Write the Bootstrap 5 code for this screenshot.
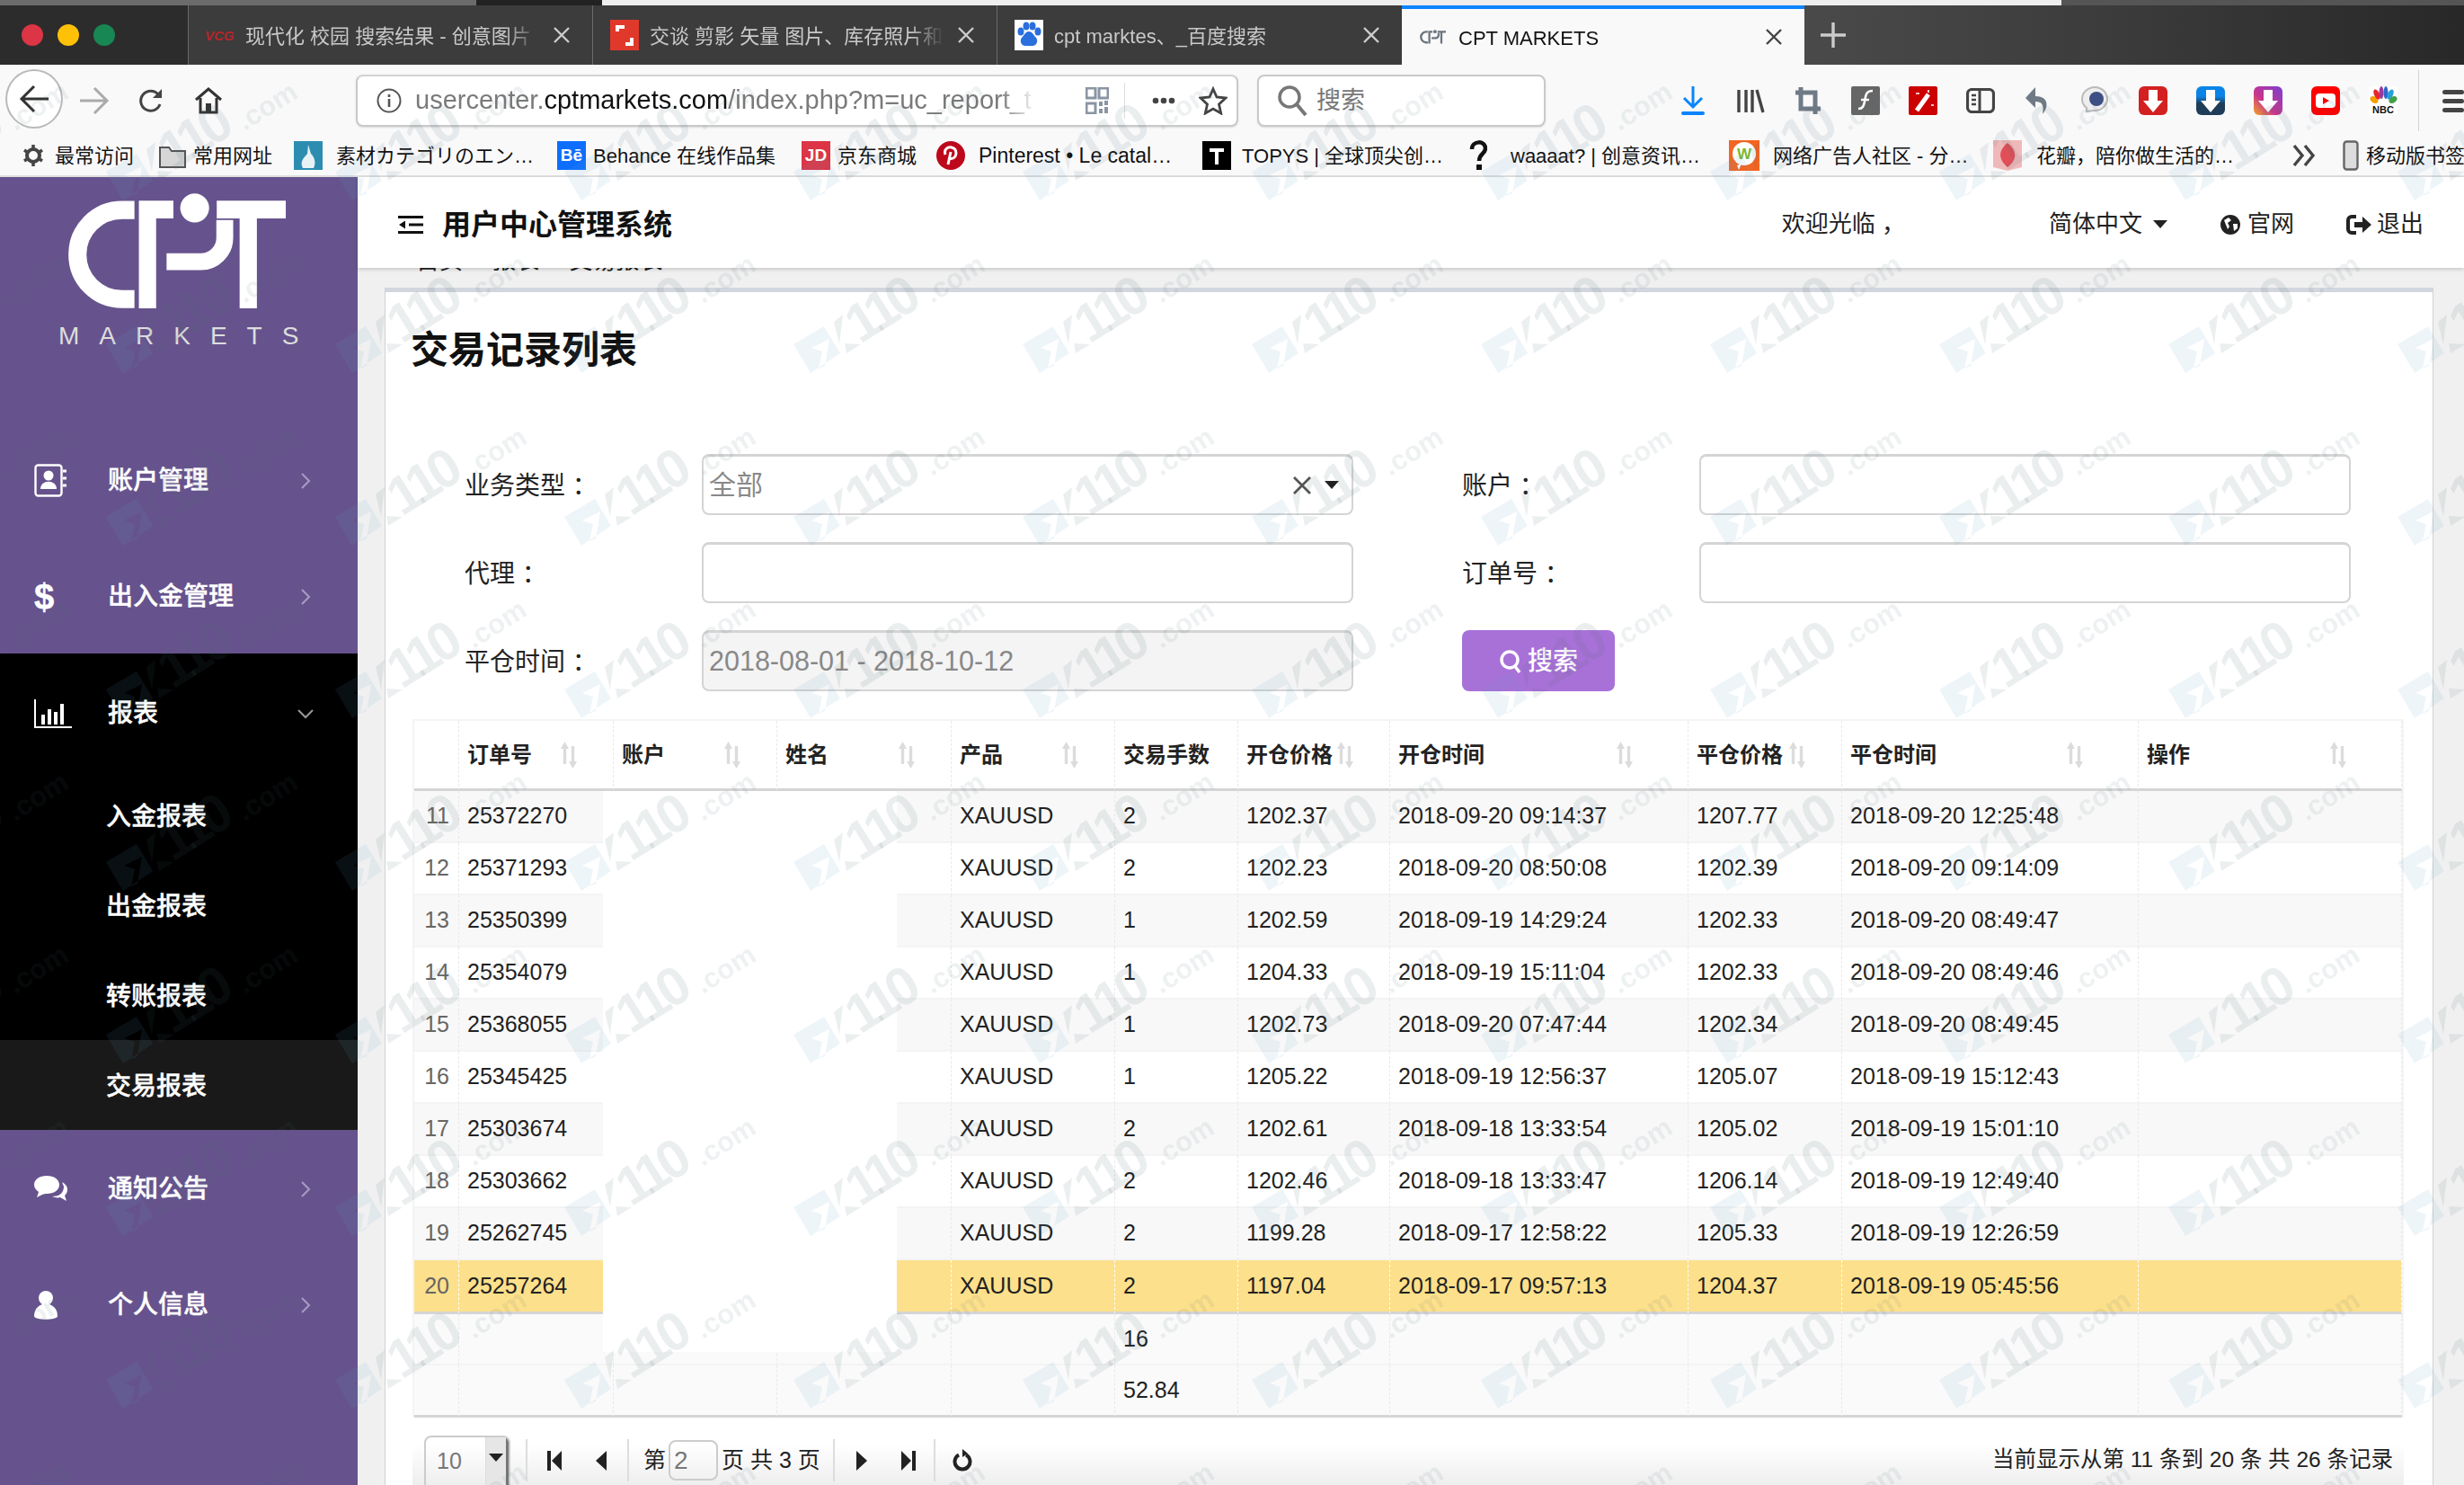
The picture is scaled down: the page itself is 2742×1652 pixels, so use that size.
<!DOCTYPE html>
<html lang="zh-CN">
<head>
<meta charset="UTF-8">
<title>CPT MARKETS</title>
<link href="https://cdn.jsdelivr.net/npm/bootstrap@5.3.3/dist/css/bootstrap.min.css" rel="stylesheet">
<script src="https://cdn.jsdelivr.net/npm/bootstrap@5.3.3/dist/js/bootstrap.bundle.min.js"></script>
<style>
html,body{margin:0;height:100%}
body{font-family:"Liberation Sans","Noto Sans CJK SC",sans-serif;color:#222;background:#f0f0f0;overflow:hidden;font-size:25px}
.page-shell{position:relative;width:2742px;height:1652px;overflow:hidden}
.wm-layer{position:absolute;left:0;top:72px;width:2742px;height:1580px;pointer-events:none;z-index:20}
/* browser chrome */
.top-strip{height:6px;display:flex}
.top-strip span:nth-child(1){width:530px;background:#6b6b6b}
.top-strip span:nth-child(2){width:140px;background:#222}
.top-strip span:nth-child(3){width:1624px;background:#eee}
.top-strip span:nth-child(4){flex:1;background:#555}
.tab-strip{height:66px;display:flex;background:#2c2c2c;color:#c9c9c9;font-size:22px}
.lights{width:209px;display:flex;align-items:center;gap:16px;padding-left:24px}
.lights i{width:24px;height:24px;border-radius:50%}
.tab-item{display:flex;align-items:center;background:#3c3c3c;border-left:1px solid #6a6a6a;white-space:nowrap;overflow:hidden}
.tab-item .tab-ico{width:34px;height:34px;margin-left:18px;margin-right:11px;flex:none;display:flex;align-items:center;justify-content:center}
.tab-item .tab-txt{flex:1;overflow:hidden;padding-top:2px;-webkit-mask-image:linear-gradient(90deg,#000 88%,transparent)}
.tab-item .tab-x{width:20px;margin:0 24px 0 14px;flex:none}
.w450{width:450px}
.w451{width:451px}
.tab-on{width:448px;background:#f9f9fa;color:#111;border-top:4px solid #0a84ff;border-left:0}
.tab-rest{flex:1;background:linear-gradient(90deg,#4a4a4a,#3c3c3c 45%,#282828);display:flex;align-items:center;padding-left:17px}
.tool-row{height:76px;background:#f9f9fa;display:flex;align-items:center;padding:4px 0 0 6px}
.back-btn{width:64px;height:66px;margin-top:-4px;border:2px solid #b9b9b9;border-radius:50%;background:#fff;display:flex;align-items:center;justify-content:center}
.tool-btn{display:flex;align-items:center;justify-content:center;flex:none}
.w70{width:70px}.w56{width:56px}.w72{width:72px}
.url-box{margin-left:128px;width:982px;height:58px;background:#fff;border:2px solid #c9c9c9;border-top-color:#d2d2d2;border-radius:8px;display:flex;align-items:center;padding-left:20px;box-shadow:0 1px 2px rgba(0,0,0,.12)}
.url-text{font-size:29px;color:#7a7a7a;margin-left:14px;width:692px;white-space:nowrap;-webkit-mask-image:linear-gradient(90deg,#000 94%,transparent)}
.url-text b{font-weight:400;color:#111}
.url-side{margin-left:auto;display:flex;align-items:center}
.url-sep{width:1px;height:40px;background:#ddd;margin:0 30px 0 17px}
.star-ico{margin:0 10px 0 26px}
.search-box{margin-left:21px;width:321px;height:58px;background:#fff;border:2px solid #c9c9c9;border-radius:8px;display:flex;align-items:center;padding-left:20px;color:#777;font-size:27px;gap:10px;box-shadow:0 1px 2px rgba(0,0,0,.12)}
.tool-icons{margin-left:132px;display:flex;align-items:center}
.tool-icons>span{width:64px;display:flex;justify-content:center}
.tool-sep{width:1px;height:68px;background:#d4d4d4;margin-left:7px}
.menu-bars{margin-left:26px;width:24px;display:flex;flex-direction:column;gap:5px}
.menu-bars i{height:5px;background:#444;border-radius:3px}
.mark-row{height:49px;background:#f9f9fa;border-bottom:2px solid #ddd;display:flex;align-items:center;padding:3px 0 0 25px;font-size:22px;color:#111;white-space:nowrap}
.mark-item{display:flex;align-items:center;gap:8px;flex:none;overflow:hidden}
.mark-item svg{flex:none}
.fav-box{width:32px;height:32px;display:flex;align-items:center;justify-content:center;font-weight:700;color:#fff;font-size:19px;flex:none}
.latin-wide{font-size:23px}
.bm1{width:152px;gap:12px}.bm2{width:150px}.bm3{width:293px;gap:15px}.bm4{width:272px}.bm5{width:150px}.bm6{width:296px;gap:15px}.bm7{width:292px;gap:12px}
.bm8{width:294px;gap:26px;padding-left:5px}
.bm9{width:294px;gap:15px}.bm10{width:332px;gap:16px}.bm11{width:57px}
/* app */
.app-body{display:flex;height:1455px}
.side-nav{width:398px;flex:none;background:#66538d;color:#fff}
.brand-box{height:272px;padding:12px 0 0 67px}
.brand-word{margin-left:-2px}
.nav-entry{height:129px;display:flex;align-items:center;padding:3px 52px 0 38px;font-size:28px;font-weight:500;color:#fff;text-decoration:none;-webkit-text-stroke:.4px #fff}
.nav-entry .ent-ico{width:82px;flex:none;display:flex}
.nav-entry .ent-arrow{margin-left:auto}
.dollar-sign{font-size:40px;font-weight:700;line-height:1;font-family:"Liberation Sans",sans-serif}
.nav-open{background:#000}
.nav-open .nav-entry{height:131px;padding-right:48px}
.nav-sub{height:100px;display:flex;align-items:center;padding:3px 0 0 118px;font-size:28px;font-weight:500;color:#fff;text-decoration:none;-webkit-text-stroke:.4px #fff}
.nav-sub.now{background:#191919}
.nav-sub.first{height:99px}
.main-col{flex:1;min-width:0;display:flex;flex-direction:column;position:relative}
.head-bar{height:101px;flex:none;background:#fff;box-shadow:0 2px 4px rgba(0,0,0,.16);display:flex;align-items:center;padding:4px 0 0 45px;position:relative;z-index:2;font-size:26px;color:#222}
.head-title{font-size:32px;font-weight:700;margin-left:21px;color:#111}
.head-menu{margin-left:auto;display:flex;align-items:center;padding-right:45px}
.head-menu>span{display:flex;align-items:center}
.hm1{margin-right:160px;white-space:pre}
.hm2{margin-right:59px;gap:12px}
.hm3{margin-right:58px;gap:8px}
.hm4{gap:6px}
.crumb-bar{height:48px;margin-top:-26px;padding-left:65px;font-size:26px;line-height:36px;flex:none;word-spacing:26px}
.report-card{margin:0 34px 0 30px;background:#fff;border-top:5px solid #d2d6de;padding:42px 33px 0 30px;flex:1;border-radius:0}
.report-title{font-size:42px;font-weight:700;line-height:46px;margin:0 0 92px -2px;color:#111}
.filter-grid{display:grid;grid-template-columns:264px 725px 121px 264px 725px;grid-auto-rows:68px;row-gap:30px;margin-left:58px;align-items:center;font-size:28px;color:#222}
.filter-grid label{padding-top:4px;white-space:pre}
.filter-grid .form-control{height:68px;border:2px solid #d4d4d4;border-top-width:3px;border-radius:8px;font-size:30px;padding:0 6px;color:#888;display:flex;align-items:center;background:#fff}
.filter-grid .locked{background:#f4f4f4;font-size:30.5px}
.clear-ico{margin-left:auto;margin-right:14px}
.caret-down{width:0;height:0;border:8px solid transparent;border-top:9px solid #222;border-bottom:0;flex:none}
.form-control .caret-down{margin-right:8px}
.filter-btn{width:170px;height:68px;background:#a871d8;border:0;border-radius:8px;color:#fff;font-size:28px;font-weight:500;display:flex;align-items:center;justify-content:center;gap:6px;padding:2px 0 0}
.grid-wrap{position:relative;margin-top:31px;border:solid #f4f4f4;border-width:2px 2px 0;width:2216px}
.mask-block{position:absolute;left:210px;top:78px;width:327px;height:624px;background:#fff;z-index:1}
.trade-table{table-layout:fixed;width:2212px;margin:0;border-collapse:separate;border-spacing:0;--bs-table-bg:transparent;font-size:25px;color:#222}
.trade-table th,.trade-table td{padding:0 0 0 9px;border:0;border-right:1px dashed #e9e9e9;border-bottom:2px solid #f4f4f4;white-space:nowrap;vertical-align:middle;box-shadow:none;background:transparent;color:#222}
.trade-table th{height:78px;font-size:24px;font-weight:700;border-bottom:3px solid #d5d5d5}
.trade-table th>div{display:flex;align-items:center;padding-right:39px}
.trade-table th.far>div{padding-right:60px}
.trade-table th svg{margin-left:auto}
.trade-table tbody td{height:58px}
.trade-table tbody tr:nth-child(odd) td{background:#f8f8f8}
.trade-table tbody tr.hl-row td{background:#fde08b;border-right:1px dashed #fff;border-bottom:0;height:57px}
.trade-table tbody td:first-child{color:#666;text-align:right;padding:0 10px 0 0}
.trade-table tbody tr:last-child td{border-bottom:3px solid #d5d5d5;height:60px}
.trade-table tfoot td{height:58px;background:#fafafa}
.trade-table tfoot tr:first-child td{height:57px}
.trade-table tfoot tr:last-child td{border-bottom:3px solid #d5d5d5;height:58px}
.col-idx{width:50px}.col-ord{width:172px}.col-acc{width:182px}.col-nam{width:194px}.col-pro{width:182px}.col-lot{width:137px}.col-opx{width:169px}.col-otm{width:332px}.col-cpx{width:171px}.col-ctm{width:330px}
.pager-bar{height:75px;display:flex;align-items:flex-start;background:linear-gradient(#fff,#fff 40%,#eee);width:2216px;font-size:25px;color:#222;padding-top:24px}
.pg-cell{height:47px;display:flex;align-items:center;border-right:2px solid #ddd;flex:none}
.pg1{width:128px;padding-left:13px}
.pg2{width:113px;gap:38px;padding-left:22px}
.pg3{width:229px;padding-left:16px}
.pg4{width:112px;gap:38px;padding-left:24px}
.pg5{border:0;padding-left:19px}
.size-box{width:96px;height:70px;margin-top:-4px;border:2px solid #ccc;border-radius:8px;display:flex;color:#777;align-self:flex-start;overflow:hidden}
.size-box em{font-style:normal;padding:8px 0 0 12px;flex:1}
.size-box u{width:26px;text-decoration:none;background:#e6e6e6;border-left:1px solid #ddd;border-right:3px solid #777;display:flex;justify-content:center;padding-top:18px}
.page-input{width:55px;height:45px;border:2px solid #ccc;border-radius:8px;color:#777;font-size:28px;display:flex;align-items:center;padding-left:4px;margin:0 4px 0 3px}
.pg-total{margin-left:auto;padding-right:12px;height:47px;display:flex;align-items:center;font-size:24.5px}
</style>
</head>
<body>
<div class="page-shell">

<!-- shared symbols -->
<svg width="0" height="0" class="d-block">
  <defs>
    <symbol id="cpt-mark" viewBox="150 20 600 320">
      <path d="M335 75H304a111 111 0 0 0 0 222h31" fill="none" stroke="currentColor" stroke-width="45"/>
      <path d="M346 52h86v44h-43v224h-43z" fill="currentColor"/>
      <circle cx="485" cy="70" r="36" fill="currentColor"/>
      <path d="M415 204h85a60 60 0 0 0 60-60V100" fill="none" stroke="currentColor" stroke-width="42"/>
      <path d="M540 52h172v44h-72v224h-43V96h-57z" fill="currentColor"/>
    </symbol>
    <symbol id="sort-pair" viewBox="0 0 20 30">
      <path d="M5.500 0 10 8H7.200V25H3.800V8H1zM14.500 30 10 22h2.800V5h3.400v17H19z" fill="#dcdcdc"/>
    </symbol>
  </defs>
</svg>

<!-- Browser chrome -->
<div class="top-strip"><span></span><span></span><span></span><span></span></div>
<div class="tab-strip">
  <div class="lights"><i class="bg-danger"></i><i class="bg-warning"></i><i class="bg-success"></i></div>
  <div class="tab-item w450">
    <span class="tab-ico"><svg width="34" height="20"><text x="0" y="16" font-size="15" font-weight="700" font-style="italic" fill="#b8242a" font-family="Liberation Sans">VCG</text></svg></span>
    <span class="tab-txt">现代化 校园 搜索结果 - 创意图片</span>
    <svg class="tab-x" viewBox="0 0 20 20" height="20"><path d="M2 2 18 18M18 2 2 18" stroke="#ccc" stroke-width="2.400"/></svg>
  </div>
  <div class="tab-item w450">
    <span class="tab-ico"><svg width="32" height="34"><rect width="32" height="34" fill="#e0392b"/><path d="M8 13V8h8M24 20v7h-7" fill="none" stroke="#fff" stroke-width="4"/></svg></span>
    <span class="tab-txt">交谈 剪影 矢量 图片、库存照片和</span>
    <svg class="tab-x" viewBox="0 0 20 20" height="20"><path d="M2 2 18 18M18 2 2 18" stroke="#ccc" stroke-width="2.400"/></svg>
  </div>
  <div class="tab-item w451">
    <span class="tab-ico"><svg width="32" height="34"><rect width="32" height="34" fill="#fff"/><g fill="#2a6fdc"><ellipse cx="7" cy="13" rx="3.500" ry="4.500"/><ellipse cx="13" cy="7" rx="3.500" ry="4.500"/><ellipse cx="20" cy="7" rx="3.500" ry="4.500"/><ellipse cx="26" cy="13" rx="3.500" ry="4.500"/><path d="M16 13c4 0 5 4 8 7 3 4 0 9-4 9h-8c-4 0-7-5-4-9 3-3 4-7 8-7z"/></g></svg></span>
    <span class="tab-txt">cpt marktes、_百度搜索</span>
    <svg class="tab-x" viewBox="0 0 20 20" height="20"><path d="M2 2 18 18M18 2 2 18" stroke="#ccc" stroke-width="2.400"/></svg>
  </div>
  <div class="tab-item tab-on">
    <span class="tab-ico"><svg width="32" height="20" class="text-secondary"><use href="#cpt-mark"/></svg></span>
    <span class="tab-txt">CPT MARKETS</span>
    <svg class="tab-x" viewBox="0 0 20 20" height="20"><path d="M2 2 18 18M18 2 2 18" stroke="#444" stroke-width="2.400"/></svg>
  </div>
  <div class="tab-rest"><svg width="30" height="30"><path d="M15 1V29M1 15H29" stroke="#ccc" stroke-width="3.400"/></svg></div>
</div>

<div class="tool-row">
  <span class="back-btn"><svg width="36" height="34"><path d="M18 3 4 17 18 31M4 17H34" fill="none" stroke="#333" stroke-width="3"/></svg></span>
  <span class="tool-btn w70"><svg width="36" height="34"><path d="M18 3 32 17 18 31M32 17H2" fill="none" stroke="#aaa" stroke-width="3"/></svg></span>
  <span class="tool-btn w56"><svg width="32" height="32"><path d="M26 20a11 11 0 1 1-2-11" fill="none" stroke="#444" stroke-width="3"/><path d="M28 3v10H18z" fill="#444"/></svg></span>
  <span class="tool-btn w72"><svg width="32" height="32"><path d="M2 15 16 3 30 15M7 13V29H25V13" fill="none" stroke="#333" stroke-width="3"/><rect x="13" y="19" width="6" height="10" fill="#333"/></svg></span>
  <div class="url-box">
    <svg width="30" height="30"><circle cx="15" cy="15" r="12.500" fill="none" stroke="#555" stroke-width="2"/><path d="M15 13v9M15 8v3" stroke="#555" stroke-width="2.600"/></svg>
    <div class="url-text">usercenter.<b>cptmarkets.com</b>/index.php?m=uc_report_t</div>
    <div class="url-side">
      <svg width="26" height="30" viewBox="0 0 26 30"><path d="M1 1h10v11H1zM15 1h10v11H15zM1 18h10v11H1z" fill="none" stroke="#8a95a3" stroke-width="3"/><path d="M15 16h4v5h-4zM21 22h4v7h-4zM15 24h4v5h-4zM21 15h4v5h-4z" fill="#8a95a3"/></svg>
      <span class="url-sep"></span>
      <svg width="26" height="8"><circle cx="4" cy="4" r="3.300" fill="#444"/><circle cx="13" cy="4" r="3.300" fill="#444"/><circle cx="22" cy="4" r="3.300" fill="#444"/></svg>
      <svg class="star-ico" width="32" height="32" viewBox="0 0 32 32"><path d="M16 3l4 9 10 1-7.500 7 2.200 10L16 25l-8.700 5 2.200-10L2 13l10-1z" fill="none" stroke="#444" stroke-width="2.800"/></svg>
    </div>
  </div>
  <div class="search-box">
    <svg width="34" height="36"><circle cx="14" cy="14" r="11" fill="none" stroke="#777" stroke-width="3.500"/><path d="M22 22 32 34" stroke="#777" stroke-width="4"/></svg>
    <span>搜索</span>
  </div>
  <div class="tool-icons">
    <span><svg width="28" height="34"><path d="M14 1V23M4 14 14 24 24 14" fill="none" stroke="#0a84ff" stroke-width="3"/><rect x="1" y="29" width="26" height="4" rx="2" fill="#0a84ff"/></svg></span>
    <span><svg width="32" height="28"><path d="M3 2V27M11 2V27M18 2V27M23 2 30 27" stroke="#444" stroke-width="3.400" fill="none"/></svg></span>
    <span><svg width="30" height="32"><path d="M7 1V25H29M1 7H23V31" fill="none" stroke="#6f7a86" stroke-width="5"/></svg></span>
    <span><svg width="32" height="32"><rect width="32" height="32" rx="2" fill="#666"/><path d="M24 5c-8 0-8 6-9 12-1 5-2 8-7 8" fill="none" stroke="#fff" stroke-width="2.600"/><path d="M11 15h9" stroke="#fff" stroke-width="2.400"/></svg></span>
    <span><svg width="32" height="32"><rect width="32" height="32" rx="2" fill="#c00"/><path d="M9 27 22 9" stroke="#fff" stroke-width="5"/><path d="M8 8h4M25 21h3M22 4v3" stroke="#fff" stroke-width="1.600"/></svg></span>
    <span><svg width="32" height="28"><rect x="1.500" y="1.500" width="29" height="25" rx="5" fill="none" stroke="#444" stroke-width="3.200"/><path d="M15 2V26" stroke="#444" stroke-width="3"/><path d="M6 8h5M6 13h5M6 18h5" stroke="#444" stroke-width="2.400"/></svg></span>
    <span><svg width="30" height="32"><path d="M12 1 1 13l11 11v-7c7 0 10 3 8 14 7-8 7-20-8-20z" fill="#6f7a86"/></svg></span>
    <span><svg width="32" height="32"><path d="M6 28V24a14 13 0 1 1 8 3z" fill="#eee" stroke="#bbb" stroke-width="2"/><circle cx="17" cy="14" r="8" fill="#3e4f85"/></svg></span>
    <span><svg width="32" height="32"><rect width="32" height="32" rx="6" fill="#d32020"/><path d="M11 4h10v12h6L16 29 5 16h6z" fill="#fff"/></svg></span>
    <span><svg width="32" height="32"><defs><linearGradient id="bl" x1="0" y1="0" x2="0" y2="1"><stop offset=".35" stop-color="#0a84e6"/><stop offset=".6" stop-color="#1f3d58"/></linearGradient></defs><rect width="32" height="32" rx="6" fill="url(#bl)"/><path d="M11 4h10v12h6L16 29 5 16h6z" fill="#fff"/></svg></span>
    <span><svg width="32" height="32"><defs><linearGradient id="ig" x1="1" y1="0" x2="0" y2="1"><stop offset="0" stop-color="#7a3fd0"/><stop offset=".6" stop-color="#c9358d"/><stop offset="1" stop-color="#f5a623"/></linearGradient></defs><rect width="32" height="32" rx="6" fill="url(#ig)"/><path d="M11 4h10v12h6L16 29 5 16h6z" fill="#fff"/></svg></span>
    <span><svg width="32" height="32"><rect width="32" height="32" rx="6" fill="#f00"/><rect x="5" y="8" width="22" height="16" rx="4" fill="#fff"/><path d="M13 12l7 4-7 4z" fill="#f00"/></svg></span>
    <span><svg width="32" height="32"><rect width="32" height="32" rx="3" fill="#fff"/><g><ellipse cx="6" cy="15" rx="3.500" ry="5" fill="#f5a000" transform="rotate(-55 6 15)"/><ellipse cx="9" cy="9" rx="3" ry="6" fill="#e8262a" transform="rotate(-25 9 9)"/><ellipse cx="14" cy="7" rx="2.500" ry="7" fill="#9b3a9e"/><ellipse cx="19" cy="7" rx="2.500" ry="7" fill="#3068c8"/><ellipse cx="24" cy="9" rx="3" ry="6" fill="#2a9ed8" transform="rotate(25 24 9)"/><ellipse cx="27" cy="15" rx="3.500" ry="5" fill="#43a047" transform="rotate(55 27 15)"/></g><text x="16" y="30" text-anchor="middle" font-size="11" font-weight="700" fill="#111" font-family="Liberation Sans">NBC</text></svg></span>
  </div>
  <span class="tool-sep"></span>
  <div class="menu-bars"><i></i><i></i><i></i></div>
</div>

<div class="mark-row">
  <div class="mark-item bm1"><svg width="24" height="26" viewBox="0 0 24 26"><circle cx="12" cy="13" r="7" fill="none" stroke="#444" stroke-width="4"/><path d="M12 1v4M12 21v4M2 7l3 2M19 17l3 2M2 19l3-2M19 9l3-2" stroke="#444" stroke-width="3.500"/></svg><span>最常访问</span></div>
  <div class="mark-item bm2"><svg width="30" height="28"><path d="M1 5h10l3 4h15v18H1z" fill="#d6d6d6" stroke="#555" stroke-width="2"/></svg><span>常用网址</span></div>
  <div class="mark-item bm3"><svg width="32" height="32"><rect width="32" height="32" fill="#2c8db0"/><path d="M10 30c-4-8 2-12 5-16l1-10 3 10c4 4 6 10 3 16z" fill="#e8f2f5"/></svg><span>素材カテゴリのエン…</span></div>
  <div class="mark-item bm4"><span class="fav-box text-bg-primary"><span>Bē</span></span><span>Behance 在线作品集</span></div>
  <div class="mark-item bm5"><span class="fav-box text-bg-danger"><span>JD</span></span><span>京东商城</span></div>
  <div class="mark-item bm6"><svg width="32" height="32"><circle cx="16" cy="16" r="16" fill="#bd081c"/><path d="M13 26 16 12M10 15c-2-6 3-9 7-8 5 1 6 6 4 10-2 3-6 3-7 1" fill="none" stroke="#fff" stroke-width="3"/></svg><span class="latin-wide">Pinterest • Le catal…</span></div>
  <div class="mark-item bm7"><svg width="32" height="32"><rect width="32" height="32" fill="#000"/><path d="M8 8h16v4h-6v14h-4V12H8z" fill="#fff"/></svg><span>TOPYS | 全球顶尖创…</span></div>
  <div class="mark-item bm8"><svg width="20" height="34"><path d="M3 10C3 0 18 0 18 9c0 6-7 6-7 14" fill="none" stroke="#111" stroke-width="4.500"/><rect x="8" y="27" width="6" height="6" fill="#111"/></svg><span>waaaat? | 创意资讯…</span></div>
  <div class="mark-item bm9"><svg width="34" height="34"><path d="M0 0h34v34H0z" fill="#f26522"/><circle cx="17" cy="15" r="13" fill="#fff"/><path d="M9 28 14 26 11 33z" fill="#fff"/><text x="17" y="21" text-anchor="middle" font-size="17" font-weight="700" fill="#7cb82f" font-family="Liberation Sans">W</text></svg><span>网络广告人社区 - 分…</span></div>
  <div class="mark-item bm10"><svg width="32" height="34"><path d="M0 0h32v30l-16 4L0 30z" fill="#f0b9b9"/><path d="M16 3c10 8 12 18 0 27C5 21 6 11 16 3z" fill="#e04f58"/></svg><span>花瓣，陪你做生活的…</span></div>
  <div class="mark-item bm11"><svg width="28" height="26"><path d="M3 2 12 13 3 24M15 2 24 13 15 24" fill="none" stroke="#444" stroke-width="3.400"/></svg></div>
  <div class="mark-item"><svg width="18" height="34"><rect x="1.500" y="1.500" width="15" height="31" rx="3" fill="#ddd" stroke="#666" stroke-width="2.400"/></svg><span>移动版书签</span></div>
</div>

<div class="app-body">
  <!-- Sidebar -->
  <nav class="side-nav">
    <div class="brand-box">
      <svg class="d-block text-white" width="268" height="143"><use href="#cpt-mark"/></svg>
      <svg class="d-block brand-word" width="320" height="50"><text x="0" y="31" font-size="28" fill="#ddd" letter-spacing="22" font-family="Liberation Sans">MARKETS</text></svg>
    </div>
    <a class="nav-entry" href="#">
      <span class="ent-ico"><svg width="36" height="38"><rect x="1.500" y="1.500" width="29" height="34" rx="3" fill="none" stroke="#fff" stroke-width="2.400"/><circle cx="16" cy="13" r="5.500" fill="#fff"/><path d="M7 28c0-11 18-11 18 0z" fill="#fff"/><path d="M32 8h4M32 16h4M32 24h4" stroke="#fff" stroke-width="3"/></svg></span>
      <span>账户管理</span>
      <svg class="ent-arrow" width="12" height="20"><path d="M2 2 10 10 2 18" fill="none" stroke="#a99cc4" stroke-width="2"/></svg>
    </a>
    <a class="nav-entry" href="#">
      <span class="ent-ico"><span class="dollar-sign">$</span></span>
      <span>出入金管理</span>
      <svg class="ent-arrow" width="12" height="20"><path d="M2 2 10 10 2 18" fill="none" stroke="#a99cc4" stroke-width="2"/></svg>
    </a>
    <div class="nav-open">
      <a class="nav-entry" href="#">
        <span class="ent-ico"><svg width="42" height="32"><path d="M1 0V31H42" fill="none" stroke="#fff" stroke-width="2"/><path d="M8 17h4v11H8zM15 11h4v17h-4zM22 14h4v14h-4zM29 5h4v23h-4z" fill="#fff"/></svg></span>
        <span>报表</span>
        <svg class="ent-arrow" width="20" height="12"><path d="M2 2 10 10 18 2" fill="none" stroke="#999" stroke-width="2"/></svg>
      </a>
      <a class="nav-sub first" href="#">入金报表</a>
      <a class="nav-sub" href="#">出金报表</a>
      <a class="nav-sub" href="#">转账报表</a>
      <a class="nav-sub now" href="#">交易报表</a>
    </div>
    <a class="nav-entry" href="#">
      <span class="ent-ico"><svg width="38" height="30"><path d="M14 0c8 0 14 4 14 10s-6 10-14 10c-2 0-3 0-5 1l-6 3 2-6C2 16 0 13 0 10 0 4 6 0 14 0z" fill="#fff"/><path d="M31 7c4 2 6 5 6 8s-1 5-3 7l2 6-7-4c-3 1-6 0-9-1 7 0 13-3 13-11z" fill="#fff"/></svg></span>
      <span>通知公告</span>
      <svg class="ent-arrow" width="12" height="20"><path d="M2 2 10 10 2 18" fill="none" stroke="#a99cc4" stroke-width="2"/></svg>
    </a>
    <a class="nav-entry" href="#">
      <span class="ent-ico"><svg width="26" height="32"><circle cx="13" cy="8" r="8" fill="#fff"/><path d="M0 28c0-18 26-18 26 0 0 5-26 5-26 0z" fill="#fff"/></svg></span>
      <span>个人信息</span>
      <svg class="ent-arrow" width="12" height="20"><path d="M2 2 10 10 2 18" fill="none" stroke="#a99cc4" stroke-width="2"/></svg>
    </a>
  </nav>

  <!-- Main -->
  <div class="main-col">
    <div class="head-bar">
      <svg width="28" height="20"><path d="M0 1.500H28M12 10H28M0 18.500H28" stroke="#111" stroke-width="3"/><path d="M8 5.500 1 10l7 4.500z" fill="#111"/></svg>
      <span class="head-title">用户中心管理系统</span>
      <div class="head-menu">
        <span class="hm1">欢迎光临 ，</span>
        <span class="hm2">简体中文<i class="caret-down"></i></span>
        <span class="hm3"><svg width="22" height="22"><circle cx="11" cy="11" r="11" fill="#222"/><path d="M4 6l5-3 3 3-4 3 2 4-2 3zM14 10l5 0 0 5-4 3z" fill="#fff"/></svg>官网</span>
        <span class="hm4"><svg width="28" height="24"><path d="M11 3H6a4 4 0 0 0-4 4v10a4 4 0 0 0 4 4h5" fill="none" stroke="#222" stroke-width="4"/><path d="M9 9h9V3l10 9-10 9v-6H9z" fill="#222"/></svg>退出</span>
      </div>
    </div>
    <div class="crumb-bar">首页 报表 交易报表</div>

    <div class="card report-card">
      <h3 class="report-title">交易记录列表</h3>

      <form class="filter-grid">
        <label>业务类型 ：</label>
        <div class="form-control"><span>全部</span><svg class="clear-ico" width="22" height="22"><path d="M2 2 20 20M20 2 2 20" stroke="#555" stroke-width="2.800"/></svg><i class="caret-down"></i></div>
        <span></span>
        <label>账户 ：</label>
        <input class="form-control" type="text">
        <label>代理 ：</label>
        <input class="form-control" type="text">
        <span></span>
        <label>订单号 ：</label>
        <input class="form-control" type="text">
        <label>平仓时间 ：</label>
        <div class="form-control locked">2018-08-01 - 2018-10-12</div>
        <span></span>
        <button type="button" class="btn filter-btn"><svg width="26" height="28"><circle cx="12" cy="12" r="9" fill="none" stroke="#fff" stroke-width="3.400"/><path d="M17 18l6 8" stroke="#fff" stroke-width="3.400"/></svg>搜索</button>
      </form>

      <div class="grid-wrap">
        <div class="mask-block"></div>
        <table class="table trade-table">
          <thead>
            <tr>
              <th class="col-idx"></th>
              <th class="col-ord"><div>订单号<svg width="20" height="30"><use href="#sort-pair"/></svg></div></th>
              <th class="col-acc"><div>账户<svg width="20" height="30"><use href="#sort-pair"/></svg></div></th>
              <th class="col-nam"><div>姓名<svg width="20" height="30"><use href="#sort-pair"/></svg></div></th>
              <th class="col-pro"><div>产品<svg width="20" height="30"><use href="#sort-pair"/></svg></div></th>
              <th class="col-lot"><div>交易手数</div></th>
              <th class="col-opx"><div>开仓价格<svg width="20" height="30"><use href="#sort-pair"/></svg></div></th>
              <th class="col-otm far"><div>开仓时间<svg width="20" height="30"><use href="#sort-pair"/></svg></div></th>
              <th class="col-cpx"><div>平仓价格<svg width="20" height="30"><use href="#sort-pair"/></svg></div></th>
              <th class="col-ctm far"><div>平仓时间<svg width="20" height="30"><use href="#sort-pair"/></svg></div></th>
              <th class="far"><div>操作<svg width="20" height="30"><use href="#sort-pair"/></svg></div></th>
            </tr>
          </thead>
          <tbody id="tradeRows"></tbody>
          <tfoot>
            <tr><td></td><td></td><td></td><td></td><td></td><td>16</td><td></td><td></td><td></td><td></td><td></td></tr>
            <tr><td></td><td></td><td></td><td></td><td></td><td>52.84</td><td></td><td></td><td></td><td></td><td></td></tr>
          </tfoot>
        </table>
      </div>

      <div class="pager-bar">
        <div class="pg-cell pg1"><div class="size-box"><em>10</em><u><i class="caret-down"></i></u></div></div>
        <div class="pg-cell pg2">
          <svg width="16" height="22"><rect width="4" height="22" fill="#222"/><path d="M16 0V22L5 11z" fill="#222"/></svg>
          <svg width="12" height="22"><path d="M12 0V22L0 11z" fill="#222"/></svg>
        </div>
        <div class="pg-cell pg3">第<span class="page-input">2</span>页 共 3 页</div>
        <div class="pg-cell pg4">
          <svg width="12" height="22"><path d="M0 0V22L12 11z" fill="#222"/></svg>
          <svg width="16" height="22"><rect x="12" width="4" height="22" fill="#222"/><path d="M0 0V22L11 11z" fill="#222"/></svg>
        </div>
        <div class="pg-cell pg5"><svg width="22" height="26"><path d="M15 6.500a8.500 8.500 0 1 1-8 0" fill="none" stroke="#222" stroke-width="4"/><path d="M11 0v9l6-4z" fill="#222"/></svg></div>
        <div class="pg-total">当前显示从第 11 条到 20 条 共 26 条记录</div>
      </div>
    </div>
  </div>
</div>

<!-- FX110 watermark lies over the whole page -->
<svg class="wm-layer" width="2742" height="1580">
  <defs>
    <pattern id="wmTile" patternUnits="userSpaceOnUse" x="1893" y="161" width="255" height="192">
      <path fill-rule="evenodd" d="M10 150 44 130 62 160 29 182zM30 154 50 144 45 174 38 177 42 158z" fill="rgb(90,160,200)" fill-opacity=".1"/>
      <path d="M55 125 65 117 61 150z" fill="rgb(70,100,110)" fill-opacity=".1"/>
      <path d="M67 149 85 150 69 160z" fill="rgb(70,100,110)" fill-opacity=".1"/>
      <text transform="translate(84 150) rotate(-32)" font-family="Liberation Sans" font-weight="700" font-size="60" letter-spacing="-6" fill="rgb(70,100,110)" fill-opacity=".11">110</text>
      <text transform="translate(164 105) rotate(-32)" font-family="Liberation Sans" font-weight="700" font-size="31" fill="rgb(70,100,110)" fill-opacity=".09">.com</text>
    </pattern>
  </defs>
  <rect width="2742" height="1580" fill="url(#wmTile)"/>
</svg>

</div>

<script>
// trade rows, page 2 of the report
const trades = [
  [11,25372270,2,'1202.37','2018-09-20 09:14:37','1207.77','2018-09-20 12:25:48'],
  [12,25371293,2,'1202.23','2018-09-20 08:50:08','1202.39','2018-09-20 09:14:09'],
  [13,25350399,1,'1202.59','2018-09-19 14:29:24','1202.33','2018-09-20 08:49:47'],
  [14,25354079,1,'1204.33','2018-09-19 15:11:04','1202.33','2018-09-20 08:49:46'],
  [15,25368055,1,'1202.73','2018-09-20 07:47:44','1202.34','2018-09-20 08:49:45'],
  [16,25345425,1,'1205.22','2018-09-19 12:56:37','1205.07','2018-09-19 15:12:43'],
  [17,25303674,2,'1202.61','2018-09-18 13:33:54','1205.02','2018-09-19 15:01:10'],
  [18,25303662,2,'1202.46','2018-09-18 13:33:47','1206.14','2018-09-19 12:49:40'],
  [19,25262745,2,'1199.28','2018-09-17 12:58:22','1205.33','2018-09-19 12:26:59'],
  [20,25257264,2,'1197.04','2018-09-17 09:57:13','1204.37','2018-09-19 05:45:56']
];
document.getElementById('tradeRows').innerHTML = trades.map(t => `
  <tr class="${t[0] === 20 ? 'hl-row' : ''}">
    <td>${t[0]}</td><td>${t[1]}</td><td></td><td></td><td>XAUUSD</td>
    <td>${t[2]}</td><td>${t[3]}</td><td>${t[4]}</td><td>${t[5]}</td><td>${t[6]}</td><td></td>
  </tr>`).join('');
</script>
</body>
</html>
